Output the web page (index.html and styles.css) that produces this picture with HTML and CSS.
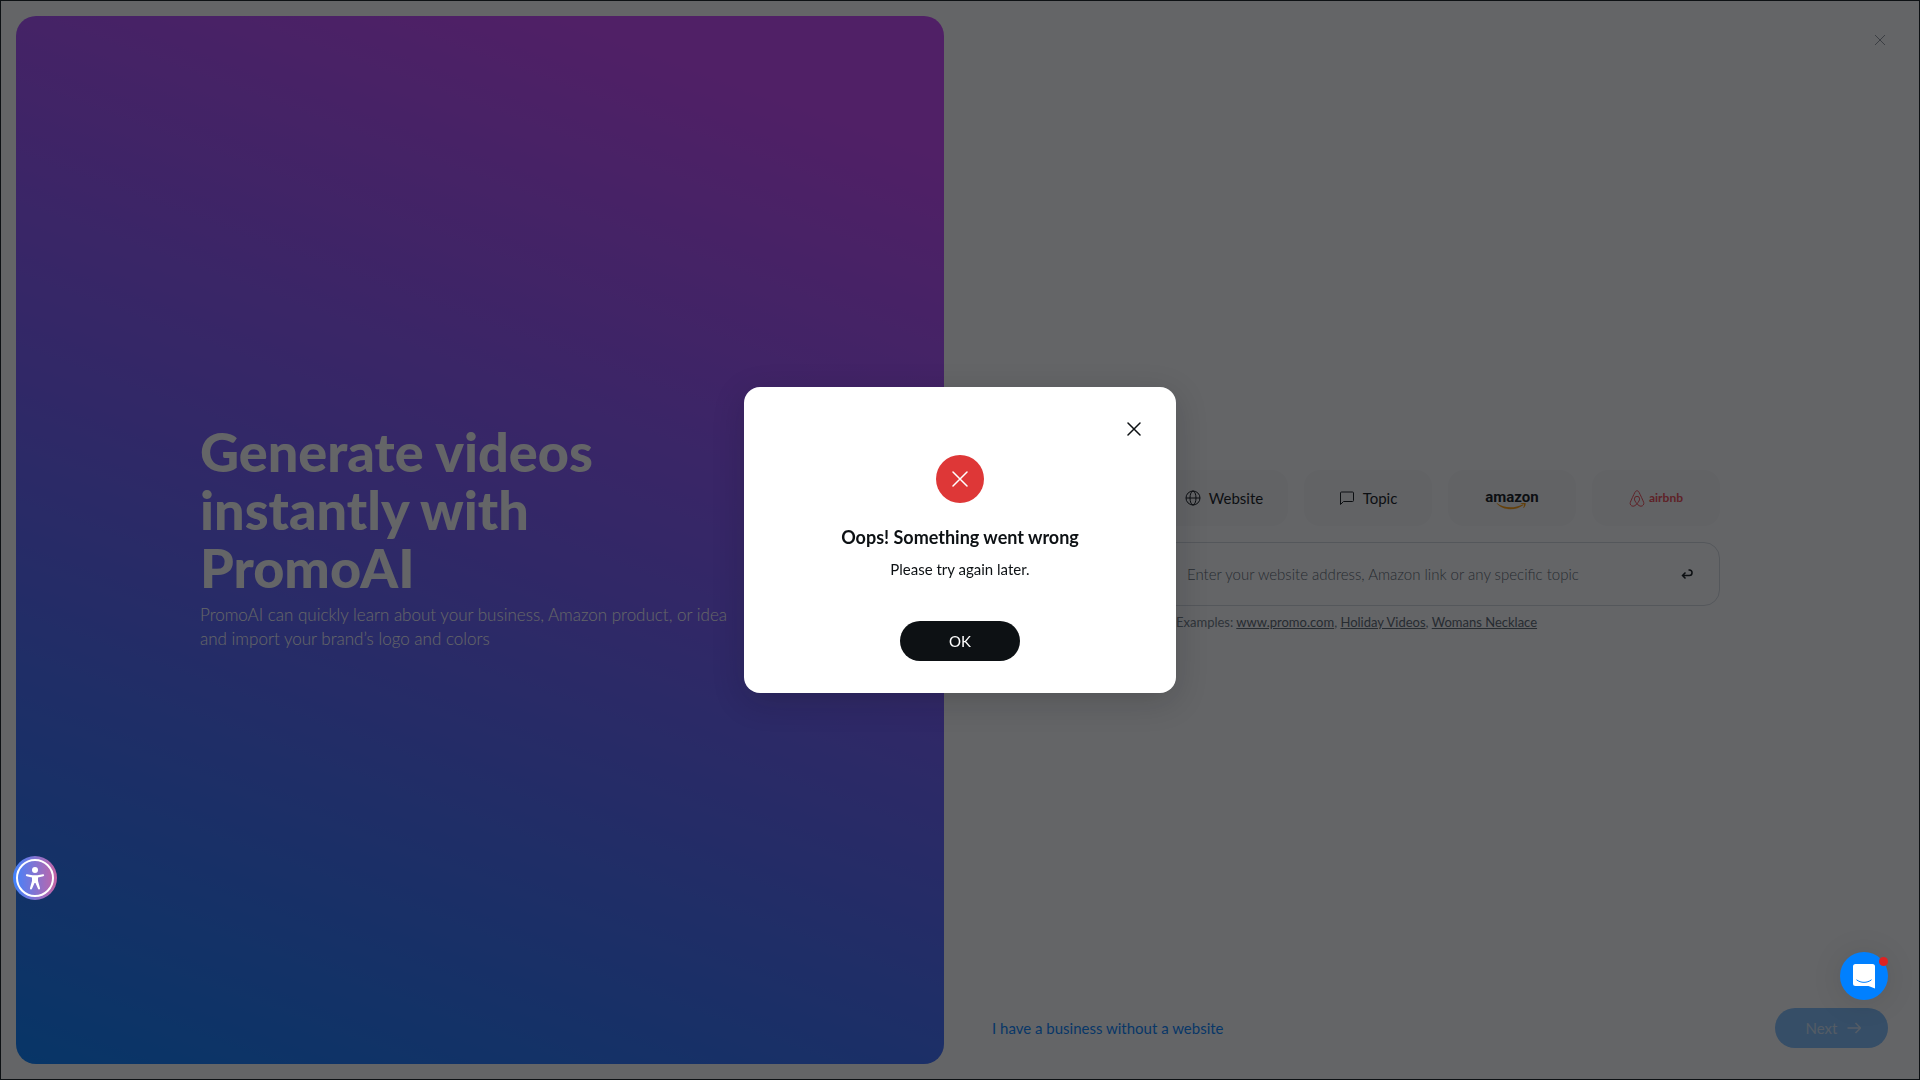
FILE: index.html
```html
<!DOCTYPE html>
<html lang="en">
<head>
  <meta charset="UTF-8">
  <meta name="viewport" content="width=device-width, initial-scale=1.0">
  <title>PromoAI</title>
  <link rel="stylesheet" href="styles.css">
</head>
<body>
  <div class="page">
    <section class="intro">
      <div class="intro-text">
        <h1>Generate videos<br>instantly with<br>PromoAI</h1>
        <p>PromoAI can quickly learn about your business, Amazon product, or idea and import your brand’s logo and colors</p>
      </div>
    </section>

    <main class="setup">
      <header class="setup-header">
        <button class="icon-btn page-close" aria-label="Close">
          <svg width="12" height="12" viewBox="0 0 12 12"><path d="M1 1l10 10M11 1L1 11"/></svg>
        </button>
      </header>

      <form class="setup-form">
        <div class="sources">
          <button type="button" class="source">
            <svg width="16" height="16" viewBox="0 0 16 16"><circle cx="8" cy="8" r="7"/><ellipse cx="8" cy="8" rx="3" ry="7"/><path d="M1 8h14"/></svg>
            Website
          </button>
          <button type="button" class="source">
            <svg width="16" height="16" viewBox="0 0 16 16"><path d="M2.500 2h11A1 1 0 0 1 14.500 3v7.500a1 1 0 0 1-1 1H4.500L1.500 14.500V3a1 1 0 0 1 1-1z"/></svg>
            Topic
          </button>
          <button type="button" class="source amazon">
            <span>amazon</span>
            <svg width="40" height="7" viewBox="0 0 40 7"><path d="M5 0c7 5.500 18 5.500 26 1.200l.6.8C24 7.800 11 8 4.600.6z"/><path d="M28.500.8c2-1.400 4.500-1.200 5-.8.5.5 0 3.500-1.700 5l-.6-.3c.6-1.200 1-2.800.7-3.300-.4-.5-2-.4-3.300-.2z"/></svg>
          </button>
          <button type="button" class="source airbnb">
            <svg width="16" height="17" viewBox="0 0 15 17"><path d="M7.500 13.800C5.800 11.700 4.900 10.200 4.900 8.900a2.600 2.600 0 0 1 5.200 0c0 1.300-.9 2.800-2.600 4.900zM7.500 13.800c-1.500 1.700-2.700 2.400-4 2.400A2.900 2.900 0 0 1 .8 12.400C1.800 9.800 4.200 4.800 5.300 2.600 5.900 1.400 6.500.8 7.500.8s1.600.6 2.200 1.800c1.100 2.200 3.500 7.200 4.500 9.800a2.900 2.900 0 0 1-2.700 3.800c-1.300 0-2.500-.7-4-2.400z"/></svg>
            airbnb
          </button>
        </div>

        <div class="search">
          <input type="text" aria-label="Website address, Amazon link or topic" placeholder="Enter your website address, Amazon link or any specific topic">
          <button type="button" class="icon-btn enter" aria-label="Submit">
            <svg width="12" height="11" viewBox="0 0 12 11"><path d="M4.500 3.500L1.500 6.500l3 3M1.500 6.500h6.800a2.700 2.700 0 0 0 0-5.500H7.500"/></svg>
          </button>
        </div>

        <p class="examples">Examples: <a href="#">www.promo.com</a>, <a href="#">Holiday Videos</a>, <a href="#">Womans Necklace</a></p>
      </form>

      <footer class="setup-footer">
        <a href="#" class="no-website">I have a business without a website</a>
        <button class="next">
          Next
          <svg width="14" height="12" viewBox="0 0 14 12"><path d="M.5 6h13M8.500 1l5 5-5 5"/></svg>
        </button>
      </footer>
    </main>
  </div>

  <div class="overlay">
    <div class="modal" role="alertdialog" aria-labelledby="modal-title">
      <button class="icon-btn modal-close" aria-label="Close dialog">
        <svg width="14" height="14" viewBox="0 0 14 14"><path d="M1 1l12 12M13 1L1 13"/></svg>
      </button>
      <div class="error-icon">
        <svg width="16" height="16" viewBox="0 0 16 16"><path d="M1 1l14 14M15 1L1 15"/></svg>
      </div>
      <h2 id="modal-title">Oops! Something went wrong</h2>
      <p>Please try again later.</p>
      <button class="ok">OK</button>
    </div>
  </div>

  <button class="accessibility" aria-label="Accessibility menu">
    <svg width="44" height="44" viewBox="0 0 44 44">
      <circle class="ring" cx="22" cy="22" r="18"/>
      <circle cx="22" cy="14" r="3"/>
      <path d="M14 18.200l5.500 1h5l5.500-1a1 1 0 0 1 .3 2L25 21.500v3.500l2 7a1 1 0 0 1-2 .8L22.500 27h-1L19 32.800a1 1 0 0 1-2-.8l2-7v-3.500l-5.300-1.300a1 1 0 0 1 .3-2z"/>
    </svg>
  </button>

  <button class="chat" aria-label="Open chat">
    <svg width="22" height="25" viewBox="0 0 22 25">
      <path class="bubble" d="M2.500 0h17A2.500 2.500 0 0 1 22 2.500V24.500L15.500 22h-13A2.500 2.500 0 0 1 0 19.500v-17A2.500 2.500 0 0 1 2.500 0z"/>
      <path class="smile" d="M3.800 16c4 3.200 10.400 3.200 14.400 0"/>
    </svg>
    <span class="badge"></span>
  </button>
</body>
</html>
```
FILE: styles.css
```css
* {
  box-sizing: border-box;
}
body {
  margin: 0;
  font-family: Lato, "Liberation Sans", sans-serif;
  font-size: 15px;
  line-height: 24px;
  color: #0d1114;
}
h1, h2, p {
  margin: 0;
}
button {
  font: inherit;
  color: inherit;
  border: none;
  padding: 0;
  cursor: pointer;
}
svg {
  display: block;
  fill: none;
  stroke: currentColor;
}
.icon-btn {
  background: none;
}
.page {
  display: grid;
  grid-template-columns: 1fr 1fr;
  min-height: 100vh;
  background: #fff;
}
.intro {
  display: flex;
  align-items: center;
  margin: 16px;
  padding: 0 184px 6px;
  border-radius: 20px;
  background: linear-gradient(20deg, #007cff 0%, #7257ff 50%, #c840fc 90%);
  color: #fff;
}
.intro-text {
  max-width: 540px;
}
.intro h1 {
  margin-bottom: 6px;
  font-size: 54px;
  line-height: 58px;
  font-weight: 900;
}
.intro p {
  font-size: 17px;
  font-weight: 300;
}

/* right side */
.setup {
  display: flex;
  flex-direction: column;
  justify-content: space-between;
  padding: 32px;
}
.setup-header {
  display: flex;
  justify-content: flex-end;
  padding: 2px 2px 0;
  height: 64px;
}
.page-close {
  align-self: flex-start;
  color: #8d949b;
}
.setup-form {
  width: 560px;
  max-width: 100%;
  margin: 0 auto;
}
.sources {
  display: grid;
  grid-template-columns: repeat(4, 1fr);
  gap: 16px;
}
.source {
  display: flex;
  align-items: center;
  justify-content: center;
  gap: 8px;
  height: 56px;
  border-radius: 16px;
  background: #f9f9fa;
}
.amazon {
  flex-direction: column;
  gap: 0;
  padding-top: 4px;
  font-family: Roboto, sans-serif;
  line-height: 12px;
  font-weight: 700;
}
.amazon svg {
  fill: #ff9900;
  stroke: none;
}
.airbnb {
  gap: 4px;
  color: #f0454f;
  font-size: 12px;
  font-weight: 700;
}
.search {
  display: flex;
  align-items: center;
  height: 64px;
  margin-top: 16px;
  padding: 0 26px;
  border: 1px solid #d3d8de;
  border-radius: 16px;
}
.search input {
  flex: 1;
  border: none;
  outline: none;
  padding: 0;
  font: inherit;
  background: none;
}
.search input::placeholder {
  color: #56616b;
  font-weight: 300;
}
.enter {
  stroke-width: 1.5;
}
.examples {
  margin-top: 4px;
  padding-left: 16px;
  font-size: 13px;
  color: #6b7680;
}
.examples a {
  color: #56616b;
}
.setup-footer {
  display: flex;
  align-items: center;
  justify-content: space-between;
}
.no-website {
  color: #0080ff;
  text-decoration: none;
}
.next {
  display: flex;
  align-items: center;
  justify-content: center;
  gap: 10px;
  width: 113px;
  height: 40px;
  padding-left: 4px;
  border-radius: 20px;
  background: #80bfff;
  color: #d2e6fa;
}
.next svg {
  stroke-width: 1.5;
}

/* error dialog */
.overlay {
  position: fixed;
  inset: 0;
  display: flex;
  align-items: center;
  justify-content: center;
  border: 1px solid #0d1114;
  background: rgba(12, 14, 17, 0.64);
}
.modal {
  display: flex;
  flex-direction: column;
  align-items: center;
  width: 432px;
  padding: 32px;
  border-radius: 16px;
  background: #fff;
  box-shadow: 0 8px 32px rgba(13, 17, 20, 0.2);
}
.modal-close {
  align-self: flex-end;
  padding: 3px;
}
.modal svg {
  stroke-width: 1.5;
  stroke-linecap: round;
}
.error-icon {
  display: flex;
  align-items: center;
  justify-content: center;
  width: 48px;
  height: 48px;
  margin: 16px 0 20px;
  border-radius: 50%;
  background: #de3737;
  color: #fff;
}
.modal h2 {
  font-size: 18px;
  line-height: 28px;
}
.modal p {
  margin-top: 6px;
}
.ok {
  width: 120px;
  height: 40px;
  margin-top: 40px;
  border-radius: 20px;
  background: #0d1114;
  color: #fff;
}

/* floating widgets */
.accessibility {
  position: fixed;
  left: 13px;
  bottom: 180px;
  border-radius: 50%;
  background: linear-gradient(90deg, #3f83ff, #c664a4);
}
.accessibility svg {
  fill: #fff;
  stroke: none;
}
.accessibility .ring {
  fill: none;
  stroke: #fff;
  stroke-width: 2;
}
.chat {
  position: fixed;
  right: 32px;
  bottom: 80px;
  display: flex;
  align-items: center;
  justify-content: center;
  width: 48px;
  height: 48px;
  border-radius: 50%;
  background: #0080ff;
  box-shadow: 0 2px 32px rgba(0, 0, 0, 0.1);
}
.chat .bubble {
  fill: #fff;
  stroke: none;
}
.chat .smile {
  stroke: #0080ff;
  stroke-linecap: round;
}
.badge {
  position: absolute;
  top: 5px;
  right: 0;
  width: 9px;
  height: 9px;
  border-radius: 50%;
  background: #de2222;
}
```
